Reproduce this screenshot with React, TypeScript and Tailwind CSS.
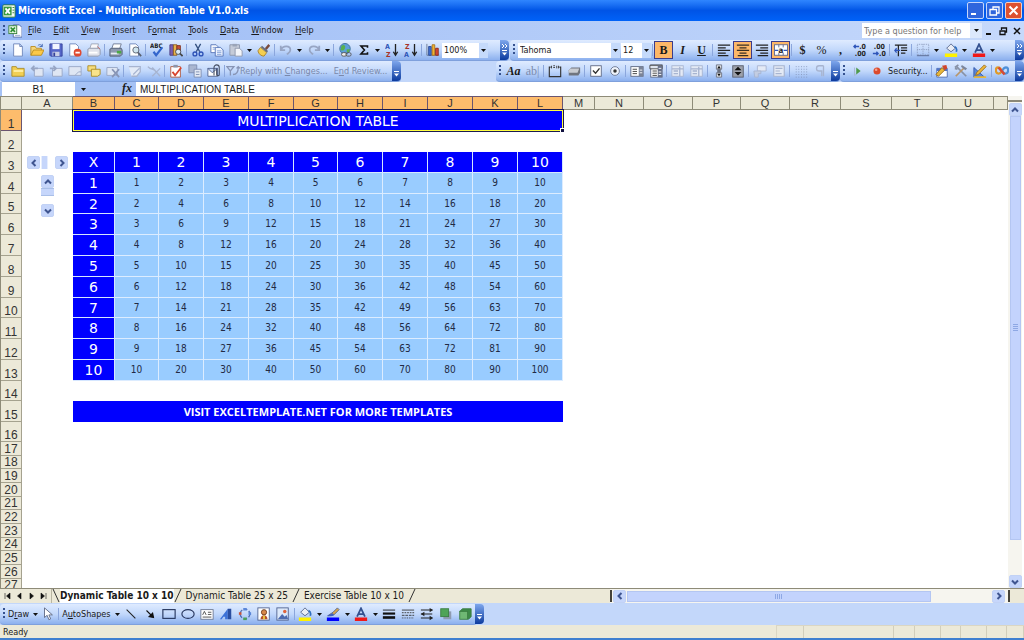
import type { ReactNode } from 'react';

const icons: Record<string, ReactNode> = {
  excel: (
    <>
      <rect x="1" y="1" width="14" height="14" rx="1" fill="#f4faf2" stroke="#2f7d32" />
      <rect x="2" y="3" width="9" height="10" fill="#3b9a3f" />
      <path d="M4 5l5 6M9 5l-5 6" stroke="#fff" strokeWidth="2" />
      <path d="M12 4h2M12 7h2M12 10h2" stroke="#2f7d32" />
    </>
  ),
  book: (
    <>
      <path d="M6 1h7l3 3v11H6z" fill="#fff" stroke="#4a66a8" />
      <rect x="1" y="2" width="9" height="9" fill="#e8f6e4" stroke="#2f7d32" />
      <path d="M3 4l5 5M8 4L3 9" stroke="#2f8f35" strokeWidth="2" />
      <path d="M8 13h6" stroke="#8fa4cf" />
    </>
  ),
  page: <path d="M3 1h7l3 3v11H3zM10 1v3h3" fill="#fff" stroke="#6b84b8" />,
  open: (
    <>
      <path d="M1 14V4h5l1 2h6v3" fill="#f5d67a" stroke="#b98a1c" />
      <path d="M1 14l3-6h12l-3 6z" fill="#fbc94a" stroke="#b98a1c" />
      <path d="M9 3c2-2 4-1 5 1M14 1v3h-3" fill="none" stroke="#3c62b0" />
    </>
  ),
  save: (
    <>
      <path d="M1 1h14v14H2l-1-1z" fill="#5566c9" stroke="#33409a" />
      <rect x="4" y="1" width="8" height="6" fill="#f2f5ff" />
      <rect x="4" y="10" width="8" height="5" fill="#c9cfe6" />
      <rect x="5" y="11" width="2" height="4" fill="#33409a" />
    </>
  ),
  permission: (
    <>
      <path d="M2 1h7l3 3v11H2z" fill="#fff" stroke="#6b84b8" />
      <circle cx="11" cy="11" r="4.500" fill="#df4a30" />
      <path d="M8.500 11h5" stroke="#fff" strokeWidth="2" />
    </>
  ),
  mail: (
    <>
      <path d="M5 1h8l-1 6H3z" fill="#f9f9fb" stroke="#9aa3b5" />
      <path d="M1 7l2-1h11l1 2v5l-2 2H1z" fill="#dfe2ea" stroke="#8a93a8" />
      <path d="M2 11h10" stroke="#fff" strokeWidth="2" />
      <path d="M12 4l3 3" stroke="#d06a60" />
    </>
  ),
  print: (
    <>
      <path d="M5 1h9l-2 6H3z" fill="#fff" stroke="#6a7690" />
      <path d="M1 7l2-1h11l1 2v5l-2 2H1z" fill="#8f9bb0" stroke="#505c74" />
      <path d="M2 12h9" stroke="#e9eef6" strokeWidth="2" />
      <path d="M9 9h5v3H9z" fill="#4aa843" />
    </>
  ),
  preview: (
    <>
      <path d="M2 1h7l3 3v11H2z" fill="#fff" stroke="#6b84b8" />
      <circle cx="9" cy="8" r="3.500" fill="#cfe5ef" stroke="#59606e" />
      <path d="M11.500 11l3.500 4" stroke="#59606e" strokeWidth="2" />
    </>
  ),
  spelling: (
    <>
      <text x="0" y="6" fontSize="7" fontWeight="bold" fill="#222">ABC</text>
      <path d="M4 10l3 4 7-9" fill="none" stroke="#3366cc" strokeWidth="2.500" />
    </>
  ),
  research: (
    <>
      <path d="M1 2h4v12H1z" fill="#7a5fb0" stroke="#4a3b80" />
      <path d="M5 2h4v12H5z" fill="#e9b44a" stroke="#8a5a20" />
      <path d="M9 3h4v6H9z" fill="#c9533a" stroke="#80301c" />
      <circle cx="10.500" cy="10" r="3" fill="#dceaf6" stroke="#444" />
      <path d="M12.500 12l3 3" stroke="#444" strokeWidth="2" />
    </>
  ),
  cut: (
    <>
      <path d="M5 1l5 9M11 1l-5 9" stroke="#33507f" strokeWidth="1.500" />
      <circle cx="4.500" cy="12.500" r="2.200" fill="none" stroke="#2b50b5" strokeWidth="1.500" />
      <circle cx="11.500" cy="12.500" r="2.200" fill="none" stroke="#2b50b5" strokeWidth="1.500" />
    </>
  ),
  copy: (
    <>
      <path d="M1 2h6l2 2v7H1z" fill="#fff" stroke="#4f6fb5" />
      <path d="M6 5h6l3 3v7H6z" fill="#eef4ff" stroke="#4f6fb5" />
      <path d="M8 9h5M8 11h5M8 13h5M3 5h3M3 7h3" stroke="#7e9bd6" />
    </>
  ),
  paste: (
    <>
      <path d="M1 2h11v12H1z" fill="#c5cbd8" stroke="#8b95aa" />
      <path d="M4 1h5v3H4z" fill="#9aa4b8" />
      <path d="M7 6h5l3 3v6H7z" fill="#f3f5fa" stroke="#8b95aa" />
    </>
  ),
  painter: (
    <>
      <path d="M9 6l4-5 2 2-4 5z" fill="#7b4a3a" />
      <path d="M4 5l7 6-3 4c-3 0-6-2-7-6z" fill="#f4cf52" stroke="#a9812a" />
      <path d="M5 4l7 6" stroke="#666c7c" strokeWidth="2" />
    </>
  ),
  undo: <path d="M2 3v5h5M2 8c3-6 11-5 11 0 0 3-3 4-4 5" fill="none" stroke="#97a5c4" strokeWidth="2" />,
  redo: <path d="M14 3v5H9M14 8C11 2 3 3 3 8c0 3 3 4 4 5" fill="none" stroke="#97a5c4" strokeWidth="2" />,
  link: (
    <>
      <circle cx="8" cy="6.500" r="6" fill="#5c9fd8" stroke="#3a6b9a" />
      <path d="M4 3c3-2 5 0 4 3s-3 3-5 2zM10 7l4 0-2 4-2-1z" fill="#57b04c" />
      <rect x="4" y="11" width="6" height="4" rx="2" fill="#eee" stroke="#555" />
      <rect x="9" y="11" width="6" height="4" rx="2" fill="none" stroke="#555" />
    </>
  ),
  sigma: <path d="M12 5.500V3.500H4.500L8.500 8l-4 4.500H12v-2" fill="none" stroke="#111" strokeWidth="1.800" />,
  sortAsc: (
    <>
      <text x="0" y="7" fontSize="8" fontWeight="bold" fill="#2f55b8">A</text>
      <text x="1" y="16" fontSize="8" fontWeight="bold" fill="#a83228">Z</text>
      <path d="M12 1v12M9.500 10l2.500 4 2.500-4" fill="none" stroke="#222" strokeWidth="1.500" />
    </>
  ),
  sortDesc: (
    <>
      <text x="1" y="7" fontSize="8" fontWeight="bold" fill="#a83228">Z</text>
      <text x="0" y="16" fontSize="8" fontWeight="bold" fill="#2f55b8">A</text>
      <path d="M12 1v12M9.500 10l2.500 4 2.500-4" fill="none" stroke="#222" strokeWidth="1.500" />
    </>
  ),
  chart: (
    <>
      <path d="M1 1v13h14" fill="none" stroke="#6b7890" />
      <path d="M3 4h3v10H3z" fill="#3f6fd0" stroke="#2a4a96" />
      <path d="M7 2h3v12H7z" fill="#f2b32f" stroke="#a8741a" />
      <path d="M11 6h3v8h-3z" fill="#d84a33" stroke="#8a2819" />
    </>
  ),
  left: <path d="M1 2.500h14M1 5.500h9M1 8.500h14M1 11.500h9M1 14.500h12" stroke="#222" strokeWidth="1.400" />,
  center: <path d="M1 2.500h14M4 5.500h8M1 8.500h14M4 11.500h8M2 14.500h12" stroke="#3a2f22" strokeWidth="1.400" />,
  right: <path d="M1 2.500h14M6 5.500h9M1 8.500h14M6 11.500h9M3 14.500h12" stroke="#222" strokeWidth="1.400" />,
  merge: (
    <>
      <rect x="0.500" y="2" width="15" height="12" fill="#fff" stroke="#5a6690" />
      <path d="M5.500 2v3M10.500 2v3M5.500 11v3M10.500 11v3" stroke="#5a6690" />
      <text x="5" y="11" fontSize="9" fontWeight="bold" fill="#222">a</text>
      <path d="M1 8.500h4M11 8.500h4" stroke="#2f55b8" strokeWidth="1.500" />
    </>
  ),
  incDecimal: (
    <>
      <text x="7" y="7" fontSize="8" fontWeight="bold" fill="#222">.0</text>
      <text x="2" y="15" fontSize="8" fontWeight="bold" fill="#222">.00</text>
      <path d="M7 4H1M3 2L1 4l2 2" fill="none" stroke="#2f55b8" strokeWidth="1.500" />
    </>
  ),
  decDecimal: (
    <>
      <text x="2" y="7" fontSize="8" fontWeight="bold" fill="#222">.00</text>
      <text x="8" y="15" fontSize="8" fontWeight="bold" fill="#222">.0</text>
      <path d="M1 12h6M5 10l2 2-2 2" fill="none" stroke="#2f55b8" strokeWidth="1.500" />
    </>
  ),
  indent: (
    <>
      <path d="M1 2.500h14M8 5.500h7M8 8.500h7M8 11.500h5M5 2v13" stroke="#222" strokeWidth="1.400" />
      <path d="M7 8.500H1M3 6L1 8.500 3 11" fill="none" stroke="#2f55b8" strokeWidth="1.500" />
    </>
  ),
  borders: (
    <>
      <path d="M1.500 1.500h13v12h-13zM8 1.500v12M1.500 7.500h13" fill="none" stroke="#8897b8" strokeDasharray="1 1" />
      <path d="M1 14.500h14" stroke="#55658c" />
    </>
  ),
  fill: (
    <>
      <path d="M3 6l5-5 5 5-5 4z" fill="#e9edf5" stroke="#55658c" />
      <path d="M12 4c2 1 3 3 2 6" fill="none" stroke="#2f6fc0" strokeWidth="2" />
      <rect x="1" y="12" width="14" height="4" fill="#fff200" />
    </>
  ),
  lineColor: (
    <>
      <path d="M2 10l6-4 5-5 2 2-6 6z" fill="#d9a74a" stroke="#55658c" />
      <path d="M1 10c3 0 4-3 7-3l1 2c-2 2-5 2-8 1z" fill="#3f62c0" />
      <rect x="1" y="12" width="14" height="4" fill="#0000ff" />
    </>
  ),
  fontColor: (
    <>
      <path d="M3.500 11L8 1.500 12.500 11M5 8h6" fill="none" stroke="#33508f" strokeWidth="2" />
      <rect x="1" y="12" width="14" height="4" fill="#f01818" />
    </>
  ),
  folder: (
    <>
      <path d="M1 14V3h5l1 2h8v9z" fill="#f2cf54" stroke="#a98a22" />
      <path d="M3 8h11" stroke="#fff0a8" strokeWidth="2" />
    </>
  ),
  noteBack: (
    <>
      <path d="M5 5h10v9H5z" fill="#dfe6f3" stroke="#97a5c4" />
      <path d="M9 5H2M5 2L2 5l3 3" fill="none" stroke="#97a5c4" strokeWidth="2" />
    </>
  ),
  noteNext: (
    <>
      <path d="M4 5h11v9H4z" fill="#dfe6f3" stroke="#97a5c4" />
      <path d="M1 5h7M5 2l3 3-3 3" fill="none" stroke="#97a5c4" strokeWidth="2" />
    </>
  ),
  note: <path d="M1 3h14v10H1zM8 13l4-4h3" fill="#dfe6f3" stroke="#97a5c4" />,
  notes: (
    <>
      <path d="M1 2h9v6H1z" fill="#f6dd7c" stroke="#a98a22" />
      <path d="M5 6h10v6l-3 2H5z" fill="#f9e38a" stroke="#a98a22" />
    </>
  ),
  noteDelete: (
    <>
      <path d="M1 4h12v9H1z" fill="#dfe6f3" stroke="#97a5c4" />
      <path d="M7 6l8 9M15 6l-8 9" stroke="#8794b5" strokeWidth="2" />
    </>
  ),
  ink: <path d="M1 3h13v6l-4 5H4M6 12l7-7" fill="#e4ebf7" stroke="#a7b4d0" strokeWidth="1.500" />,
  inkDelete: <path d="M1 3c4 5 8 1 9 6M6 4l9 10M15 5L6 14" fill="none" stroke="#a7b4d0" strokeWidth="1.500" />,
  task: (
    <>
      <path d="M2 3h11v12H2z" fill="#fff" stroke="#b05638" />
      <path d="M5 1h5v3H5z" fill="#8b95aa" />
      <path d="M4 9l3 4 7-9" fill="none" stroke="#d8432c" strokeWidth="2" />
    </>
  ),
  saveVersion: (
    <>
      <path d="M1 1h9v9H1z" fill="#aab6d0" stroke="#7c8bb0" />
      <path d="M7 6h8v9H7z" fill="#e3e9f4" stroke="#7c8bb0" />
      <path d="M9 9h4M9 12h4" stroke="#7c8bb0" />
    </>
  ),
  attach: (
    <>
      <path d="M1 5h11v9H1zM1 5l5 5 6-5" fill="#fff" stroke="#4d5f8c" />
      <path d="M8 13V4c0-4 6-4 6 0v8c0 2-3 2-3 0V5" fill="none" stroke="#444c60" strokeWidth="1.200" />
    </>
  ),
  reply: <path d="M1 3h8L5 8zM5 8v5M8 12c4 0 6-3 6-8M12 5l2-2 2 2" fill="none" stroke="#8794b5" strokeWidth="1.500" />,
  group: (
    <>
      <path d="M3 3.500H1.500v11h13v-11H13" fill="none" stroke="#333" strokeWidth="1.300" />
      <path d="M4 2v3M6 2h2M6 4h2M10 2v3M12 2v3" stroke="#333" />
    </>
  ),
  button: (
    <>
      <path d="M2 7l3-3h10v6l-2 3H2z" fill="#70757f" />
      <path d="M2 7l2-2h10l-2 5H2z" fill="#c9ccd2" />
    </>
  ),
  check: (
    <>
      <rect x="2" y="2" width="12" height="12" fill="#fff" stroke="#5a6580" />
      <path d="M4.500 7.500l3 3L12 5" fill="none" stroke="#333" strokeWidth="1.600" />
    </>
  ),
  radio: (
    <>
      <circle cx="8" cy="8" r="5" fill="#eef3fb" stroke="#6a7690" />
      <circle cx="8" cy="8" r="2" fill="#333" />
    </>
  ),
  list: (
    <>
      <rect x="1" y="3" width="14" height="11" fill="#fff" stroke="#5a6580" />
      <path d="M3 6h5M3 8.500h5M3 11h5" stroke="#333" />
      <path d="M10 3h5v11h-5z" fill="#7b8498" />
      <path d="M11 7h3M11 10h3" stroke="#fff" />
    </>
  ),
  combo: (
    <>
      <rect x="2" y="1" width="13" height="14" fill="#fff" stroke="#5a6580" />
      <path d="M1 1.500h14v4H1z" fill="#dfe5ef" stroke="#444" />
      <path d="M4 8h5M4 10.500h5M4 13h5" stroke="#333" />
      <path d="M10 2h5v13h-5z" fill="#69728a" />
      <path d="M11 5h3M11 9h3M11 12h3" stroke="#fff" />
    </>
  ),
  listOff: (
    <>
      <rect x="1" y="2" width="13" height="12" fill="#e4eaf5" stroke="#a7b4d0" />
      <path d="M1 5.500h13M3 8h5M3 11h5M10 3v11" stroke="#a7b4d0" strokeWidth="1.500" />
    </>
  ),
  scroll: (
    <>
      <path d="M5 1h6v5H5zM5 10h6v5H5z" fill="#dfe1e4" stroke="#6a7080" />
      <path d="M6 5l2-3 2 3zM6 11l2 3 2-3z" fill="#111" />
      <path d="M8 6v4" stroke="#6a7080" strokeWidth="4" />
    </>
  ),
  spinner: (
    <>
      <rect x="2" y="2" width="12" height="13" fill="#9da1ab" stroke="#555b6a" />
      <path d="M4 7l4-4 4 4zM4 9l4 4 4-4z" fill="#111" />
    </>
  ),
  props: (
    <>
      <path d="M5 2h10v6H5z" fill="#e4eaf5" stroke="#a7b4d0" />
      <path d="M1 8h8v3H6v4H2z" fill="#c3cde2" stroke="#a7b4d0" />
    </>
  ),
  code: <path d="M2 2h12v12H2zM4 5h8M4 8h5M4 11h7" fill="#e4eaf5" stroke="#a7b4d0" strokeWidth="1.300" />,
  grid: <path d="M2 3h13M2 6h13M2 9h13M2 12h13M2 15h13" stroke="#8494b8" strokeDasharray="1 2" />,
  run: (
    <>
      <path d="M4 4v9l2-1" fill="none" stroke="#a7b4d0" />
      <path d="M6 4l5 4-5 4z" fill="#4f9a4a" />
    </>
  ),
  toggleOff: <path d="M12 2H7c-4 0-4 6 0 6h3v6M12 2v12" fill="none" stroke="#a7b4d0" strokeWidth="1.500" />,
  record: (
    <>
      <circle cx="8" cy="8" r="4" fill="#dc4a2c" />
      <circle cx="7" cy="6.500" r="1.500" fill="#f5a08c" />
    </>
  ),
  vba: (
    <>
      <path d="M2 5h12v10H2z" fill="#fff" stroke="#4d6bb0" />
      <path d="M2 5h12v3H2z" fill="#4f74c8" />
      <path d="M1 12l7-8 3 3-7 7z" fill="#e8b83a" stroke="#9a6a1a" />
      <path d="M8 2l5-1 1 4-3 2z" fill="#d0452c" />
    </>
  ),
  tools: (
    <>
      <path d="M3 3l11 11" stroke="#8791a6" strokeWidth="2" />
      <path d="M12 4L2 14" stroke="#b8966a" strokeWidth="2" />
      <path d="M9 1l6 4-2 2-5-4z" fill="#7c869c" />
      <path d="M1 4l4-3M1 5l3 1" stroke="#8791a6" strokeWidth="2" />
    </>
  ),
  design: (
    <>
      <path d="M1 4v11h12z" fill="#5b86d8" stroke="#2f55a8" />
      <path d="M4 10l9-9 2 2-9 9-3 1z" fill="#f0b83a" stroke="#966a1a" />
      <path d="M1 15h14" stroke="#e8b83a" strokeWidth="2" />
    </>
  ),
  script: (
    <>
      <path d="M8 8C5 2 1 3 1 7s4 6 7 1" fill="none" stroke="#e09a28" strokeWidth="2.500" />
      <path d="M8 8c3-6 7-5 7-1s-4 6-7 1" fill="none" stroke="#4f8fd8" strokeWidth="2.500" />
      <path d="M4 4l7 8" stroke="#d84a33" strokeWidth="3" />
    </>
  ),
  pointer: <path d="M4 1v11l3-2.500 2 5 2-1-2-4.500h4z" fill="#fff" stroke="#5a6580" />,
  line: <path d="M3 3l10 10" stroke="#222" strokeWidth="1.300" />,
  arrow: <path d="M4 4l6 6M12 12l-5-1 4-4z" fill="#111" stroke="#111" strokeWidth="1.300" />,
  rect: <rect x="1" y="3" width="14" height="10" fill="none" stroke="#26365e" strokeWidth="1.300" />,
  oval: <ellipse cx="8" cy="8" rx="7" ry="5" fill="none" stroke="#26365e" strokeWidth="1.300" />,
  textbox: (
    <>
      <rect x="1" y="3" width="14" height="11" fill="#fff" stroke="#6a7690" />
      <path d="M3 9l2-4 2 4M9 6h4M9 8.500h4M3 11.500h10" fill="none" stroke="#444" />
    </>
  ),
  wordart: (
    <>
      <path d="M1 14L10 2v12H7v-3H5l-2 3z" fill="#3c72d8" />
      <path d="M10 2h4v12h-4z" fill="#2a4ea0" />
    </>
  ),
  diagram: (
    <>
      <circle cx="8" cy="8" r="5.500" fill="none" stroke="#4d6bb0" strokeWidth="1.500" strokeDasharray="4 2" />
      <path d="M6 1h4v3H6zM12 6h3v3h-3z" fill="#5b86d8" />
      <path d="M1 6h3v3H1z" fill="#c9533a" />
      <path d="M6 12h4v3H6z" fill="#4aa05a" />
    </>
  ),
  clipart: (
    <>
      <rect x="1" y="1" width="13" height="14" fill="#fff" stroke="#4d5f8c" />
      <circle cx="8" cy="6" r="3" fill="#d9884a" stroke="#6a3a1a" />
      <path d="M4 14c0-6 8-6 8 0z" fill="#b5522c" />
      <path d="M7 10h2v4H7z" fill="#f2d23c" />
    </>
  ),
  picture: (
    <>
      <rect x="1" y="1" width="13" height="14" fill="#dce9fb" stroke="#4d5f8c" />
      <path d="M2 14l5-6 3 3 2-2 2 5z" fill="#4d6bb0" />
      <circle cx="10" cy="5" r="2" fill="#e0643c" />
    </>
  ),
  lineStyle: (
    <>
      <path d="M1 3.500h14" stroke="#111" />
      <path d="M1 7.500h14" stroke="#111" strokeWidth="2.500" />
      <path d="M1 12h14" stroke="#111" strokeWidth="3" />
    </>
  ),
  dashStyle: (
    <>
      <path d="M1 3.500h14" stroke="#333" />
      <path d="M1 6.500h14" stroke="#333" strokeDasharray="2 1" />
      <path d="M1 9.500h14" stroke="#333" strokeDasharray="3 1" />
      <path d="M1 12.500h14" stroke="#333" strokeDasharray="1 1" />
    </>
  ),
  arrowStyle: (
    <>
      <path d="M1 3.500h13M1 8h13M1 12.500h13" stroke="#222" strokeWidth="1.200" />
      <path d="M11 1l4 2.500L11 6zM5 5.500L1 8l4 2.500zM11 10l4 2.500-4 2.500z" fill="#222" />
    </>
  ),
  shadow: (
    <>
      <rect x="5" y="5" width="9" height="9" fill="#8f9bb0" />
      <rect x="2" y="2" width="9" height="9" fill="#4fa457" stroke="#3a7d42" />
    </>
  ),
  cube: (
    <>
      <path d="M2 5l3-3h10v9l-3 3z" fill="#3d8a47" stroke="#3a7d42" />
      <rect x="2" y="5" width="9" height="9" fill="#6fb874" stroke="#3a7d42" />
    </>
  ),
};

const glyphs: Record<string, { text: string; style: string }> = {
  bold: { text: 'B', style: 'font-bold' },
  italic: { text: 'I', style: 'font-bold italic' },
  underline: { text: 'U', style: 'font-bold underline' },
  currency: { text: '$', style: 'font-bold' },
  percent: { text: '%', style: '' },
  comma: { text: ',', style: 'font-bold' },
  label: { text: 'Aa', style: 'font-bold italic' },
  edit: { text: 'ab|', style: "font-['Liberation_Sans'] text-[#7d8cae]" },
};

const active = ['bold', 'center', 'merge'];

const Icon = ({ name }: { name: string }) => (
  <svg viewBox="0 0 16 16" className="size-3.5 shrink-0" aria-hidden="true">{icons[name]}</svg>
);

const Caret = () => (
  <svg viewBox="0 0 5 3" className="w-[5px] h-[3px] shrink-0" aria-hidden="true">
    <path d="M0 0h5L2.500 3z" fill="#111" />
  </svg>
);

const Grip = () => (
  <span className="w-0.5 h-3 mr-[3px] ml-[3px] shrink-0 bg-[repeating-linear-gradient(#35518f_0px_2px,transparent_2px_4px)]" />
);

const Cap = ({ chevron = false }: { chevron?: boolean }) => (
  <button aria-label="Toolbar options" className="w-[9px] self-stretch ml-auto shrink-0 rounded-r-sm bg-gradient-to-b from-[#7ea6ec] to-[#0b3a9e] flex flex-col items-center justify-between py-1">
    <svg viewBox="0 0 7 4" className="w-[7px] h-1" aria-hidden="true">
      {chevron && <path d="M1 0l2 2-2 2M4 0l2 2-2 2" fill="none" stroke="#fff" />}
    </svg>
    <svg viewBox="0 0 7 6" className="w-[7px] h-1.5" aria-hidden="true">
      <path d="M1 .5h5" stroke="#fff" />
      <path d="M1 2.500h5L3.500 5.500z" fill="#fff" />
    </svg>
  </button>
);

// "|" is a separator and "v" is a drop-down arrow
const Items = ({ list }: { list: string }) => (
  <>
    {list.split(' ').map((item, i) => {
      if (item === '|') return <span key={i} className="w-px h-3 mx-px shrink-0 bg-[#8ba6dc]" />;
      if (item === 'v') return (
        <button key={i} aria-label="More" className="w-[9px] h-4 shrink-0 flex items-center justify-center"><Caret /></button>
      );
      const glyph = glyphs[item];
      return (
        <button
          key={i}
          aria-label={item}
          className={`w-[19px] h-[18px] shrink-0 flex items-center justify-center ${active.includes(item) ? 'bg-[#fdb768] border border-[#3b3c8c]' : ''}`}
        >
          {glyph
            ? <span className={`font-['Liberation_Serif',serif] text-[12px] leading-none ${glyph.style}`}>{glyph.text}</span>
            : <Icon name={item} />}
        </button>
      );
    })}
  </>
);

const bar = 'flex items-center h-[21px] rounded-sm bg-gradient-to-b from-[#dfebff] via-[#c2d8fb] to-[#8cb0ee] border-b border-[#7fa0dc]';

const Picker = ({ label, value, width }: { label: string; value: string; width: string }) => (
  <div className={`flex items-center h-[15px] bg-white shrink-0 ${width}`}>
    <select aria-label={label} className="appearance-none flex-1 min-w-0 pl-0.5 text-[9px] leading-none outline-none">
      <option>{value}</option>
    </select>
    <span className="w-[9px] h-[15px] flex items-center justify-center bg-[#c5dafb]"><Caret /></span>
  </div>
);

const Chevron = ({ dir }: { dir: 'up' | 'down' | 'left' | 'right' }) => {
  const paths = { up: 'M2 6.500L5 3.500 8 6.500', down: 'M2 3.500L5 6.500 8 3.500', left: 'M6.500 2L3.500 5 6.500 8', right: 'M3.500 2L6.500 5 3.500 8' };
  return (
    <button aria-label={`Scroll ${dir}`} className="size-[13px] shrink-0 rounded-xs border border-[#c2d2f5] bg-[#c6d6fb] flex items-center justify-center">
      <svg viewBox="0 0 10 10" className="size-2.5" aria-hidden="true">
        <path d={paths[dir]} fill="none" stroke="#3f5590" strokeWidth="2" />
      </svg>
    </button>
  );
};

const menus = ['File', 'Edit', 'View', 'Insert', 'Format', 'Tools', 'Data', 'Window', 'Help'];
const accessKey: Record<string, number> = { Format: 1 };

const columns = [
  { name: 'A', width: 'w-[51px]' },
  { name: 'B', width: 'w-[42px]' },
  { name: 'C', width: 'w-[44px]' },
  { name: 'D', width: 'w-[45px]' },
  { name: 'E', width: 'w-[45px]' },
  { name: 'F', width: 'w-[45px]' },
  { name: 'G', width: 'w-[44px]' },
  { name: 'H', width: 'w-[45px]' },
  { name: 'I', width: 'w-[45px]' },
  { name: 'J', width: 'w-[45px]' },
  { name: 'K', width: 'w-[45px]' },
  { name: 'L', width: 'w-[45px]' },
  { name: 'M', width: 'w-[32px]' },
  { name: 'N', width: 'w-[49px]' },
  { name: 'O', width: 'w-[49px]' },
  { name: 'P', width: 'w-[48px]' },
  { name: 'Q', width: 'w-[49px]' },
  { name: 'R', width: 'w-[51px]' },
  { name: 'S', width: 'w-[51px]' },
  { name: 'T', width: 'w-[51px]' },
  { name: 'U', width: 'w-[51px]' },
  { name: '', width: '' },
];

const rows = Array.from({ length: 27 }, (_, i) => i + 1);
const factors = [1, 2, 3, 4, 5, 6, 7, 8, 9, 10];

const rowHeight = (row: number) => {
  if (row > 16) return row % 3 === 0 ? 'h-[13px]' : 'h-[14px]';
  return [5, 10, 14, 16].includes(row) ? 'h-5' : 'h-[21px]';
};

const heading = "bg-[#0000ff] text-white font-['DejaVu_Sans',sans-serif] font-normal text-[14px] leading-none text-center border-r border-b border-[#d5e6ff] p-0";

const RowCells = ({ row }: { row: number }) => {
  if (row === 1) return (
    <>
      <td />
      <td colSpan={11} className="relative p-0 bg-[#0000ff] text-white font-['DejaVu_Sans',sans-serif] text-[14px] leading-none text-center outline outline-[#1a1a50] border border-[#ffff40]">
        MULTIPLICATION TABLE
        <span className="absolute -right-0.5 -bottom-0.5 size-1 bg-[#101040] border-l border-t border-white" />
      </td>
    </>
  );
  if (row === 3) return (
    <>
      <td className="p-0">
        <div className="flex items-center px-[5px]">
          <Chevron dir="left" />
          <span className="w-[7px] h-[13px] mx-px bg-[#c6d6fb] border-x border-[#e6eefe]" />
          <span className="flex-1" />
          <Chevron dir="right" />
        </div>
      </td>
      <th className={heading}>X</th>
      {factors.map((n) => <th key={n} className={heading}>{n}</th>)}
    </>
  );
  if (row >= 4 && row <= 13) return (
    <>
      {row === 4 && (
        <td rowSpan={3} className="p-0 align-top">
          <div className="flex flex-col items-center pt-0.5">
            <Chevron dir="up" />
            <span className="w-[13px] h-2 bg-[#c6d6fb] border-y border-[#a9bfe8]" />
            <span className="h-2" />
            <Chevron dir="down" />
          </div>
        </td>
      )}
      {row > 6 && <td />}
      <th className={heading}>{row - 3}</th>
      {factors.map((n) => (
        <td key={n} className="bg-[#99ccff] text-[#222a44] text-[10px] leading-none text-center border-r border-b border-[#dcecff] p-0">
          {n * (row - 3)}
        </td>
      ))}
    </>
  );
  if (row === 15) return (
    <>
      <td />
      <td colSpan={11} className="p-0 bg-[#0000ff] text-white font-['Open_Sans',sans-serif] text-[11px] leading-none font-bold text-center">
        VISIT EXCELTEMPLATE.NET FOR MORE TEMPLATES
      </td>
    </>
  );
  return <td colSpan={22} />;
};

const Sheet = () => (
  <div className="flex-1 min-h-0 flex bg-white">
    <div className="flex-1 min-w-0 overflow-hidden border-l border-[#8e8b78]">
      <table className="w-full table-fixed border-separate border-spacing-0">
        <colgroup>
          <col className="w-[21px]" />
          {columns.map((col) => <col key={col.name} className={col.width} />)}
        </colgroup>
        <thead>
          <tr className="h-3.5 font-['Liberation_Sans',sans-serif] text-[11px] leading-none text-[#333]">
            <th className="p-0 bg-[#ece9d8] border-r border-y border-[#8e8b78]" />
            {columns.map((col, i) => (
              <th
                key={col.name}
                className={`p-0 font-normal border-r border-y ${i > 0 && i < 12 ? 'bg-[#fdbc6c] border-[#6a5570]' : 'bg-[#ece9d8] border-[#8e8b78]'}`}
              >
                {col.name}
              </th>
            ))}
          </tr>
        </thead>
        <tbody>
          {rows.map((row) => (
            <tr key={row} className={rowHeight(row)}>
              <th
                className={`p-0 align-bottom font-['Liberation_Sans',sans-serif] font-normal text-[12px] leading-3 text-[#333] border-r border-b ${row === 1 ? 'bg-[#fdbc6c] border-[#6a5570]' : 'bg-[#ece9d8] border-[#a5a28f]'}`}
              >
                {row}
              </th>
              <RowCells row={row} />
            </tr>
          ))}
        </tbody>
      </table>
    </div>
    <div className="w-3.5 mr-0.5 pt-1 flex flex-col items-center shrink-0 bg-[#f6f5ef]">
      <span className="w-3.5 h-0.5 mb-px bg-[#8b8878]" />
      <Chevron dir="up" />
      <div className="w-[11px] flex-[12] flex flex-col items-center justify-center gap-px bg-[#c3d3fd] border border-[#b4c6f2]">
        {[0, 1, 2, 3].map((n) => <span key={n} className="w-[5px] h-px bg-[#8ea8e4]" />)}
      </div>
      <span className="flex-1" />
      <Chevron dir="down" />
    </div>
  </div>
);

const Slash = ({ back = false }: { back?: boolean }) => (
  <svg viewBox="0 0 8 14" className="w-2 h-3.5 shrink-0" aria-hidden="true">
    <path d={back ? 'M1 0l6 13' : 'M7 0L1 13'} stroke="#333" fill="none" />
  </svg>
);

const navPaths = ['M2 1v6M7 1L3.500 4 7 7z', 'M6 1L2.500 4 6 7z', 'M2 1l3.500 3L2 7z', 'M6 1v6M1 1l3.500 3L1 7z'];

const SheetTabs = () => (
  <div className="h-[15px] shrink-0 flex items-stretch bg-[#ece9d8] border-t border-[#8e8b78] text-[10px] leading-[14px]">
    <div className="w-[52px] flex items-center justify-between px-[3px] border-r border-[#b8b5a2]">
      {navPaths.map((d, i) => (
        <button key={i} aria-label={`Sheet navigation ${i + 1}`}>
          <svg viewBox="0 0 8 8" className="size-2"><path d={d} fill="#111" stroke="#111" strokeWidth=".6" /></svg>
        </button>
      ))}
    </div>
    <Slash back />
    <button className="bg-white font-bold whitespace-nowrap">Dynamic Table 10 x 10</button>
    <Slash />
    <button className="px-1 whitespace-nowrap">Dynamic Table 25 x 25</button>
    <Slash />
    <button className="px-1 whitespace-nowrap">Exercise Table 10 x 10</button>
    <Slash />
    <div className="w-[414px] ml-auto shrink-0 flex items-center bg-[#f6f5ef]">
      <span className="w-0.5 h-3 mr-px bg-[#45433a]" />
      <Chevron dir="left" />
      <div className="flex-[5] h-[11px] mx-px flex items-center justify-center gap-px bg-[#c3d3fd] border border-[#b4c6f2]">
        {[0, 1, 2, 3].map((n) => <span key={n} className="w-px h-[5px] bg-[#8ea8e4]" />)}
      </div>
      <span className="flex-1" />
      <Chevron dir="right" />
      <span className="w-0.5 h-3 ml-[3px] bg-[#45433a]" />
      <span className="w-3.5 h-full bg-[#ece9d8]" />
    </div>
  </div>
);

const App = () => (
  <div className="h-screen flex flex-col overflow-hidden bg-[#c3d7fa] font-['DejaVu_Sans_Condensed','DejaVu_Sans',sans-serif] text-[#1a1a1a]">
    <header className="h-[21px] shrink-0 flex items-center gap-0.5 px-0.5 bg-gradient-to-b from-[#2f86ff] via-[#0054e6] to-[#0062f8] text-white">
      <Icon name="excel" />
      <h1 className="text-[10px] leading-none font-bold whitespace-nowrap">Microsoft Excel - Multiplication Table V1.0.xls</h1>
      <div className="ml-auto flex gap-0.5">
        <button aria-label="Minimize" className="size-[17px] rounded-xs border border-[#c5d6fb] bg-[#2f66dd]">
          <svg viewBox="0 0 15 15"><path d="M3 11h5" stroke="#fff" strokeWidth="2" /></svg>
        </button>
        <button aria-label="Restore" className="size-[17px] rounded-xs border border-[#c5d6fb] bg-[#2f66dd]">
          <svg viewBox="0 0 15 15"><path d="M6 6V4h6v6H9.500M3 6.500h6.500V12H3z" fill="none" stroke="#fff" strokeWidth="1.300" /></svg>
        </button>
        <button aria-label="Close" className="size-[17px] rounded-xs border border-[#f3cfc5] bg-[#dd5130]">
          <svg viewBox="0 0 15 15"><path d="M3.500 3.500l8 8M11.500 3.500l-8 8" stroke="#fff" strokeWidth="2" /></svg>
        </button>
      </div>
    </header>

    <nav className="h-[19px] shrink-0 flex items-center text-[9px] leading-none bg-gradient-to-r from-[#9dbcf5] to-[#c6d9fb]">
      <Grip />
      <Icon name="book" />
      {menus.map((menu) => {
        const at = accessKey[menu] ?? 0;
        return (
          <button key={menu} className="px-1.5">
            {menu.slice(0, at)}<u>{menu[at]}</u>{menu.slice(at + 1)}
          </button>
        );
      })}
      <div className="ml-auto flex items-center">
        <input aria-label="Type a question for help" placeholder="Type a question for help" className="w-[108px] h-[15px] pl-0.5 bg-white text-[9px] placeholder:text-[#777] outline-none" />
        <span className="w-3 h-[15px] flex items-center justify-center bg-[#dce8fc]"><Caret /></span>
        <div className="flex gap-1 pl-0.5 pr-0.5">
          <button aria-label="Minimize workbook"><svg viewBox="0 0 10 10" className="size-2.5"><path d="M2 8h5" stroke="#111" strokeWidth="2" /></svg></button>
          <button aria-label="Restore workbook"><svg viewBox="0 0 10 10" className="size-2.5"><path d="M3.500 4V2h5v4H7M2 5h5v3.500H2z" fill="none" stroke="#111" strokeWidth="1.300" /></svg></button>
          <button aria-label="Close workbook"><svg viewBox="0 0 10 10" className="size-2.5"><path d="M2 2l6 6M8 2L2 8" stroke="#111" strokeWidth="1.500" /></svg></button>
        </div>
      </div>
    </nav>

    <div className="flex shrink-0 gap-px">
      <div className={`${bar} w-[509px]`}>
        <Grip />
        <Items list="page open save permission mail | print preview | spelling research | cut copy paste v painter | undo v redo v | link sigma v sortAsc sortDesc | chart" />
        <Picker label="Zoom" value="100%" width="w-[46px]" />
        <Cap chevron />
      </div>
      <div className={`${bar} flex-1 min-w-0`}>
        <Grip />
        <Picker label="Font" value="Tahoma" width="w-[102px]" />
        <Picker label="Font size" value="12" width="w-[30px] ml-px" />
        <Items list="| bold italic underline | left center right merge | currency percent comma incDecimal decDecimal | indent | borders v fill v fontColor v" />
        <Cap chevron />
      </div>
    </div>

    <div className="flex shrink-0">
      <div className={`${bar} w-[401px] text-[9px] text-[#7a88aa] leading-none`}>
        <Grip />
        <Items list="folder noteBack noteNext note notes noteDelete | ink inkDelete | task saveVersion attach |" />
        <button className="flex items-center whitespace-nowrap"><Icon name="reply" /><span>Reply with <u>C</u>hanges...</span></button>
        <button className="pl-1.5 whitespace-nowrap">E<u>n</u>d Review...</button>
        <Cap />
      </div>
      <div className={`${bar} ml-auto w-[344px]`}>
        <Grip />
        <Items list="label edit | group button | check radio | list combo | listOff listOff | scroll spinner | props code | grid toggleOff" />
        <Cap />
      </div>
      <div className={`${bar} w-[184px]`}>
        <Grip />
        <Items list="run record" />
        <button className="px-0.5 text-[9px] leading-none whitespace-nowrap">Security...</button>
        <Items list="| vba tools design | script" />
        <Cap />
      </div>
    </div>

    <div className="h-3.5 shrink-0 flex items-stretch pl-0.5 font-['Liberation_Sans',sans-serif] text-[10px] leading-none bg-[#a6c2f5]">
      <input aria-label="Name box" defaultValue="B1" className="w-[73px] bg-white text-center outline-none" />
      <button aria-label="Names" className="w-4 flex items-center justify-center"><Caret /></button>
      <label htmlFor="formula" className="w-[45px] text-right pr-1 font-['Liberation_Serif',serif] font-bold italic text-[12px]">fx</label>
      <input id="formula" defaultValue="MULTIPLICATION TABLE" className="flex-1 min-w-0 pl-1 bg-white outline-none" />
    </div>

    <Sheet />
    <SheetTabs />

    <div className="flex shrink-0 pt-px">
      <div className={`${bar} w-[477px] text-[9px] leading-none`}>
        <Grip />
        <button className="flex items-center gap-1"><span>D<u>r</u>aw</span><Caret /></button>
        <Items list="pointer |" />
        <button className="flex items-center gap-1 px-0.5 whitespace-nowrap"><span>A<u>u</u>toShapes</span><Caret /></button>
        <Items list="line arrow rect oval textbox wordart diagram clipart picture | fill v lineColor v fontColor v lineStyle dashStyle arrowStyle shadow cube" />
        <Cap />
      </div>
    </div>

    <footer className="h-[15px] shrink-0 flex items-stretch pl-[3px] bg-[#ece9d8] border-b-2 border-[#3f7fd0] text-[9px] leading-[14px]">
      <span>Ready</span>
      <div className="ml-auto w-[248px] flex border-l border-t border-[#dad6c4]">
        {['flex-[27]', 'flex-[90]', 'flex-[21]', 'flex-[25]', 'flex-[20]', 'flex-[25]', 'flex-[20]', 'flex-[16]'].map((grow, i) => (
          <span key={i} className={`border-r border-[#d2cebb] ${grow}`} />
        ))}
      </div>
    </footer>
  </div>
);

export default App;
